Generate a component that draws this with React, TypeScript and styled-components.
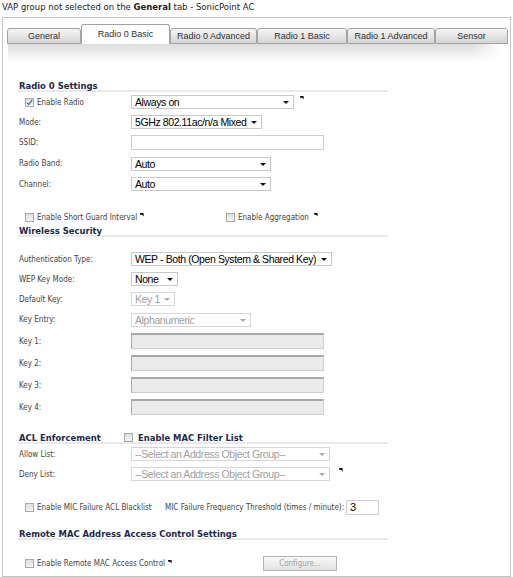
import React from 'react'
import styled, { createGlobalStyle } from 'styled-components'

const GlobalStyle = createGlobalStyle`
  body {
    margin: 0;
    background: #fff;
    font-family: "DejaVu Sans", sans-serif;
  }
`

const Caption = styled.div`
  height: 17px;
  line-height: 14px;
  padding-left: 2px;
  font-size: 8.5px;
  color: #222;
  b { font-weight: bold; }
`

const Frame = styled.div`
  margin-left: 2px;
  width: 507px;
  border: 1px solid #c4c4c4;
  padding-bottom: 5px;
`

const TabBar = styled.div`
  display: flex;
  align-items: flex-end;
  height: 20px;
  margin: 6px 0 0 4px;
`

const Tab = styled.div<{ $w: number; $active?: boolean }>`
  box-sizing: border-box;
  width: ${p => p.$w}px;
  height: ${p => (p.$active ? 20 : 16)}px;
  border: 1px solid #a2a2a2;
  border-bottom: ${p => (p.$active ? 'none' : '1px solid #a2a2a2')};
  border-radius: 3px 3px 0 0;
  background: ${p => (p.$active ? '#fff' : 'linear-gradient(#f6f6f6, #d4d4d4)')};
  font-family: "Liberation Sans", Arial, sans-serif;
  font-size: 9px;
  color: #333;
  text-align: center;
  line-height: ${p => (p.$active ? 19 : 14)}px;
`

const Shade = styled.div`
  margin-left: 5px;
  width: 494px;
  height: 18px;
  background: linear-gradient(#dcdcdc, #fff);
  -webkit-mask-image: linear-gradient(to right, #000 94%, transparent);
`

const Content = styled.div`
  padding-left: 15px;
  display: flex;
  flex-direction: column;
`

const Heading = styled.div<{ $top: number }>`
  display: flex;
  align-items: center;
  width: 370px;
  height: 10px;
  margin-top: ${p => p.$top}px;
  border-bottom: 2px solid #e9e9e9;
  font-family: "DejaVu Sans Condensed", "DejaVu Sans", sans-serif;
  font-weight: bold;
  font-size: 9.4px;
  color: #1c2a48;
  white-space: nowrap;
`

const HeadTitle = styled.span<{ $w?: number }>`
  width: ${p => (p.$w ? `${p.$w}px` : 'auto')};
  padding-left: 1px;
`

const Row = styled.div<{ $h?: number; $top?: number }>`
  display: flex;
  align-items: center;
  height: ${p => p.$h ?? 20}px;
  margin-top: ${p => p.$top ?? 0}px;
  font-family: "DejaVu Sans Condensed", "DejaVu Sans", sans-serif;
  font-size: 8px;
  color: #444;
  white-space: nowrap;
`

const Label = styled.div`
  width: 112px;
  padding-left: 1px;
`

const Cell = styled.div<{ $w: number; $pad?: number }>`
  display: flex;
  align-items: center;
  width: ${p => p.$w}px;
  padding-left: ${p => p.$pad ?? 0}px;
  flex-shrink: 0;
`

const Box = styled.span`
  display: inline-flex;
  align-items: center;
  justify-content: center;
  box-sizing: border-box;
  width: 9px;
  height: 9px;
  margin-right: 3px;
  border: 1px solid #a9a9a9;
  background: linear-gradient(#dedede, #f4f4f4);
`

const Select = styled.div<{ $w: number; $disabled?: boolean }>`
  position: relative;
  box-sizing: border-box;
  width: ${p => p.$w}px;
  height: 14px;
  padding-left: 3px;
  border: 1px solid ${p => (p.$disabled ? '#d6d6d6' : '#c8c8c8')};
  background: #fff;
  font-family: "Liberation Sans", Arial, sans-serif;
  font-size: 10.5px;
  letter-spacing: -0.4px;
  line-height: 12px;
  color: ${p => (p.$disabled ? '#a0a0a0' : '#000')};
  flex-shrink: 0;
`

const Arrow = styled.svg`
  position: absolute;
  right: 4px;
  top: 5px;
`

const Field = styled.div<{ $w: number; $h?: number; $disabled?: boolean }>`
  box-sizing: border-box;
  width: ${p => p.$w}px;
  height: ${p => p.$h ?? 15}px;
  padding-left: 3px;
  border: 1px solid #cfcfcf;
  border-top-color: ${p => (p.$disabled ? '#a8a8a8' : '#cfcfcf')};
  border-left-color: ${p => (p.$disabled ? '#a8a8a8' : '#cfcfcf')};
  border-top-width: ${p => (p.$disabled ? 2 : 1)}px;
  background: ${p => (p.$disabled ? '#ebebeb' : '#fff')};
  font-family: "Liberation Sans", Arial, sans-serif;
  font-size: 11px;
  line-height: 13px;
  color: #000;
  flex-shrink: 0;
`

const Mark = styled.svg<{ $left: number; $top: number }>`
  align-self: flex-start;
  margin-left: ${p => p.$left}px;
  margin-top: ${p => p.$top}px;
`

const Button = styled.div`
  box-sizing: border-box;
  width: 74px;
  height: 15px;
  border: 1px solid #b4b4b4;
  background: linear-gradient(#f8f8f8, #e2e2e2);
  font-family: "DejaVu Sans Condensed", "DejaVu Sans", sans-serif;
  font-size: 8px;
  line-height: 13px;
  color: #a3a3a3;
  text-align: center;
`

const Gap = styled.span<{ $w: number }>`
  display: inline-block;
  width: ${p => p.$w}px;
`

function Check({ checked }: { checked?: boolean }) {
  return (
    <Box>
      {checked && (
        <svg width="7" height="7" viewBox="0 0 7 7">
          <path d="M0.8 3.6 L2.7 5.6 L6.2 0.8" fill="none" stroke="#4f6b97" strokeWidth="1.3" />
        </svg>
      )}
    </Box>
  )
}

// little help marker next to a field
function Tip({ left, top }: { left: number; top: number }) {
  return (
    <Mark $left={left} $top={top} width="4" height="4" viewBox="0 0 4 4">
      <polygon points="0,0 3.6,0 3.6,3.6 2.2,2 0,1.4" fill="#111" />
    </Mark>
  )
}

function Drop({ w, value, disabled }: { w: number; value: string; disabled?: boolean }) {
  return (
    <Select $w={w} $disabled={disabled}>
      {value}
      <Arrow width="6" height="3" viewBox="0 0 6 3">
        <polygon points="0,0 6,0 3,3" fill={disabled ? '#aaa' : '#111'} />
      </Arrow>
    </Select>
  )
}

const tabs = [
  { name: 'General', w: 74 },
  { name: 'Radio 0 Basic', w: 89, active: true },
  { name: 'Radio 0 Advanced', w: 87 },
  { name: 'Radio 1 Basic', w: 90 },
  { name: 'Radio 1 Advanced', w: 88 },
  { name: 'Sensor', w: 73 },
]

export default function App() {
  return (
    <>
      <GlobalStyle />
      <Caption>
        VAP group not selected on the <b>General</b> tab - SonicPoint AC
      </Caption>
      <Frame>
        <TabBar>
          {tabs.map(t => (
            <Tab key={t.name} $w={t.w} $active={t.active}>
              {t.name}
            </Tab>
          ))}
        </TabBar>
        <Shade />
        <Content>
          <Heading $top={18}>
            <HeadTitle>Radio 0 Settings</HeadTitle>
          </Heading>
          <Row>
            <Label>
              <Cell $w={111} $pad={6}>
                <Check checked />
                Enable Radio
              </Cell>
            </Label>
            <Drop w={163} value="Always on" />
            <Tip left={6} top={4} />
          </Row>
          <Row>
            <Label>Mode:</Label>
            <Drop w={131} value="5GHz 802.11ac/n/a Mixed" />
          </Row>
          <Row $h={21}>
            <Label>SSID:</Label>
            <Field $w={193} />
          </Row>
          <Row $h={21}>
            <Label>Radio Band:</Label>
            <Drop w={140} value="Auto" />
          </Row>
          <Row>
            <Label>Channel:</Label>
            <Drop w={140} value="Auto" />
          </Row>
          <Row $h={14} $top={16}>
            <Cell $w={201} $pad={7}>
              <Check />
              Enable Short Guard Interval
              <Tip left={3} top={0} />
            </Cell>
            <Cell $w={120}>
              <Check />
              Enable Aggregation
              <Tip left={5} top={0} />
            </Cell>
          </Row>
          <Heading $top={1}>
            <HeadTitle>Wireless Security</HeadTitle>
          </Heading>
          <Row $top={12}>
            <Label>Authentication Type:</Label>
            <Drop w={201} value="WEP - Both (Open System & Shared Key)" />
          </Row>
          <Row>
            <Label>WEP Key Mode:</Label>
            <Drop w={47} value="None" />
          </Row>
          <Row>
            <Label>Default Key:</Label>
            <Drop w={44} value="Key 1" disabled />
          </Row>
          <Row $h={21}>
            <Label>Key Entry:</Label>
            <Drop w={120} value="Alphanumeric" disabled />
          </Row>
          {['Key 1:', 'Key 2:', 'Key 3:', 'Key 4:'].map(k => (
            <Row key={k} $h={22}>
              <Label>{k}</Label>
              <Field $w={193} $h={16} $disabled />
            </Row>
          ))}
          <Heading $top={14}>
            <HeadTitle $w={105}>ACL Enforcement</HeadTitle>
            <Check />
            <Gap $w={2} />
            Enable MAC Filter List
          </Heading>
          <Row>
            <Label>Allow List:</Label>
            <Drop w={199} value="--Select an Address Object Group--" disabled />
          </Row>
          <Row>
            <Label>Deny List:</Label>
            <Drop w={199} value="--Select an Address Object Group--" disabled />
            <Tip left={9} top={4} />
          </Row>
          <Row $h={16} $top={15}>
            <Cell $w={140} $pad={7}>
              <Check />
              Enable MIC Failure ACL Blacklist
            </Cell>
            MIC Failure Frequency Threshold (times / minute):
            <Gap $w={2} />
            <Field $w={33}>3</Field>
          </Row>
          <Heading $top={13}>
            <HeadTitle>Remote MAC Address Access Control Settings</HeadTitle>
          </Heading>
          <Row $h={16} $top={15}>
            <Cell $w={238} $pad={7}>
              <Check />
              Enable Remote MAC Access Control
              <Tip left={3} top={1} />
            </Cell>
            <Button>Configure...</Button>
          </Row>
        </Content>
      </Frame>
    </>
  )
}
